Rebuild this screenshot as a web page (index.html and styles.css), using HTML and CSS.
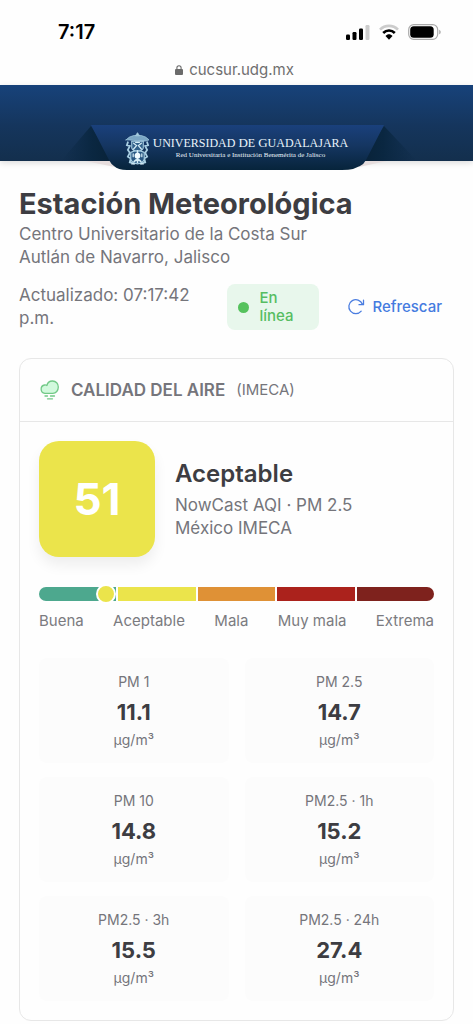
FILE: index.html
```html
<!DOCTYPE html>
<html lang="es">
<head>
<meta charset="utf-8">
<meta name="viewport" content="width=device-width, initial-scale=1">
<title>Estación Meteorológica</title>
<link rel="stylesheet" href="styles.css">
</head>
<body>
<div class="status-bar">
  <span class="clock">7:17</span>
  <div class="status-icons">
    <svg width="24" height="16" viewBox="0 0 24 16" aria-hidden="true">
      <rect x="0" y="10.500" width="4" height="5.500" rx="1.200"/>
      <rect x="6.500" y="8" width="4" height="8" rx="1.200"/>
      <rect x="13" y="4.500" width="4" height="11.500" rx="1.200"/>
      <rect x="19.500" y="1" width="4" height="15" rx="1.200" fill="#ccc"/>
    </svg>
    <svg width="20" height="16" viewBox="0 0 20 16" aria-hidden="true" fill="none" stroke-width="2.600">
      <path d="M1 5.700C6 .6 14 .6 19 5.700" stroke="#ccc"/>
      <path d="M4.200 9c3.300-3.400 8.300-3.400 11.600 0" stroke="#000"/>
      <path d="M6.500 12c2-2.300 5-2.300 7 0L10 15.800z" fill="#000"/>
    </svg>
    <svg width="34" height="16" viewBox="0 0 34 16" aria-hidden="true">
      <rect x=".7" y=".7" width="29" height="14.600" rx="5" fill="none" stroke="#aaa" stroke-width="1.200"/>
      <rect x="2.200" y="2.200" width="23.500" height="11.600" rx="3.500"/>
      <path d="M31.200 5.700c2 .8 2 3.800 0 4.600z" fill="#aaa"/>
    </svg>
  </div>
</div>
<div class="address">
  <svg width="8" height="10" viewBox="0 0 8 10" aria-hidden="true"><rect y="4" width="8" height="6" rx="1" fill="#6b6b6b"/><path d="M1.900 4.500V2.800a2.100 2.100 0 0 1 4.200 0v1.700" fill="none" stroke="#6b6b6b" stroke-width="1.100"/></svg>
  <span>cucsur.udg.mx</span>
</div>
<header class="banner">
  <div class="plaque">
    <svg class="ribbon" width="348" height="49" viewBox="0 0 348 49" aria-hidden="true">
      <defs>
        <linearGradient id="plate" x1="0" y1="0" x2="0" y2="1"><stop offset="0" stop-color="#1a407c"/><stop offset=".45" stop-color="#153662"/><stop offset="1" stop-color="#07243b"/></linearGradient>
        <linearGradient id="foldL" x1="0" x2="1"><stop offset="0" stop-color="#0b2844" stop-opacity="0"/><stop offset=".6" stop-color="#0a2741"/><stop offset="1" stop-color="#082238"/></linearGradient>
        <linearGradient id="foldR" x1="1" x2="0"><stop offset="0" stop-color="#0b2844" stop-opacity="0"/><stop offset=".6" stop-color="#0a2741"/><stop offset="1" stop-color="#082238"/></linearGradient>
      </defs>
      <path d="M22 36h30v6z" fill="#e6dddd"/><path d="M324 36h-28v6z" fill="#e6dddd"/>
      <path d="M28 1L-2 36h52z" fill="url(#foldL)"/><path d="M321 1l33 35h-56z" fill="url(#foldR)"/>
      <path d="M28 0H321L303 35Q301 39 297 41L290 44Q286 45 279 45H64Q55 45 51 41Q48 39 46 35Z" fill="url(#plate)"/>
    </svg>
    <div class="brand">
      <svg width="25" height="35" viewBox="0 0 26 35" aria-hidden="true" fill="none" stroke="#a9cfe3" stroke-linecap="round">
        <path d="M1 8.500q3-3.500 8-4.500h8q5 1 8 4.500-2 2-12 1T1 8.500z" fill="#7ba6c4" stroke-width=".7"/>
        <path d="M11 4l2-3 2 3z" fill="#a9cfe3" stroke-width=".7"/>
        <path d="M3 11l-1 3 3 1-2 4 2 3-2 4 3 2-1 4 4 1M23 11l1 3-3 1 2 4-2 3 2 4-3 2 1 4-4 1" stroke-width="1.900"/>
        <path d="M7 10h12v7q-1 3-6 3.500Q8 20 7 17z" fill="#32618a" stroke-width="1.100"/>
        <path d="M9 12l3 2.500L9 18M17 12l-3 2.500 3 3.500M11 11h4" stroke="#d6edf7" stroke-width="1.300"/>
        <path d="M6 21.500q7-3 14 0v7q-1 4-7 5-6-1-7-5z" fill="#285782" stroke-width="1.200"/>
        <path d="M13 20v12M9.500 31q3.500-4 7 0" stroke="#d6edf7" stroke-width="1.700"/>
        <circle cx="13" cy="25" r="3" fill="#f0fbff" stroke="none"/>
        <path d="M8.500 23v3M17.500 23v3M7 33.500h3M16 33.500h3" stroke="#d6edf7" stroke-width="1.300"/>
      </svg>
      <div class="brand-text">
        <div class="university"><b>U</b>NIVERSIDAD <b>D</b>E <b>G</b>UADALAJARA</div>
        <div class="motto">Red Universitaria e Institución Benemérita de Jalisco</div>
      </div>
    </div>
  </div>
</header>
<main>
  <h1>Estación Meteorológica</h1>
  <p class="muted">Centro Universitario de la Costa Sur</p>
  <p class="muted">Autlán de Navarro, Jalisco</p>
  <div class="toolbar">
    <p class="muted updated">Actualizado: 07:17:42 p.m.</p>
    <div class="online"><span class="dot"></span><span class="online-label">En línea</span></div>
    <button class="refresh" type="button">
      <svg width="18" height="18" viewBox="0 0 18 18" aria-hidden="true" fill="none" stroke="#4a7de0" stroke-width="1.300" stroke-linecap="round" stroke-linejoin="round"><path d="M14.200 13.200A7 7 0 1 1 15.400 6.200M16.500 2.200v4.500H12"/></svg>
      Refrescar
    </button>
  </div>
  <section class="card">
    <div class="card-head">
      <svg width="20" height="20" viewBox="0 0 20 20" aria-hidden="true" fill="none" stroke="#72c987" stroke-width="1.300" stroke-linecap="round" stroke-linejoin="round"><path d="M4.800 13.300a4.200 4.200 0 0 1-.2-8.300q1.300-.2 2.300.5A5.700 5.700 0 0 1 12.600 1a5.800 5.800 0 0 1 5.700 6c0 3.500-2.200 6.300-5.500 6.300z" fill="#d2f9dd"/><path d="M5 16h2.500M10.500 16h4M7.500 18.800h5"/></svg>
      <h2>CALIDAD DEL AIRE</h2><span class="standard">(IMECA)</span>
    </div>
    <div class="card-body">
      <div class="summary">
        <div class="score">51</div>
        <div><h3>Aceptable</h3><p class="muted">NowCast AQI · PM 2.5</p><p class="muted">México IMECA</p></div>
      </div>
      <div class="scale">
        <span class="good"></span><span class="fair"></span><span class="bad"></span><span class="very-bad"></span><span class="extreme"></span>
        <i class="marker" style="left:17%"></i>
      </div>
      <div class="labels"><span>Buena</span><span>Aceptable</span><span>Mala</span><span>Muy mala</span><span>Extrema</span></div>
      <div class="readings">
        <div class="reading"><span>PM 1</span><strong>11.1</strong><span>µg/m³</span></div>
        <div class="reading"><span>PM 2.5</span><strong>14.7</strong><span>µg/m³</span></div>
        <div class="reading"><span>PM 10</span><strong>14.8</strong><span>µg/m³</span></div>
        <div class="reading"><span>PM2.5 · 1h</span><strong>15.2</strong><span>µg/m³</span></div>
        <div class="reading"><span>PM2.5 · 3h</span><strong>15.5</strong><span>µg/m³</span></div>
        <div class="reading"><span>PM2.5 · 24h</span><strong>27.4</strong><span>µg/m³</span></div>
      </div>
    </div>
  </section>
</main>
</body>
</html>
```
FILE: styles.css
```css
* { box-sizing: border-box; }
body { margin: 0; background: #fefefe; color: #3d3d42; font-family: Inter, "Liberation Sans", sans-serif; }
h1, h2, h3, p { margin: 0; }
svg { flex: none; }

.status-bar { display: flex; justify-content: space-between; align-items: center; padding: 20px 31px 0 58px; }
.clock { color: #000; font-size: 20px; line-height: 24px; font-weight: 600; }
.status-icons { display: flex; align-items: center; gap: 9px; }
.address { display: flex; justify-content: center; align-items: center; gap: 6px; padding: 16px 4px 5px 0; color: #6f6f6f; font-size: 15px; line-height: 20px; }

.banner { display: flex; justify-content: center; align-items: flex-start; height: 76px; padding-top: 40px; background: linear-gradient(#17427a, #15355c 55%, #132f4d); box-shadow: 0 2px 6px #0002; }
.plaque { position: relative; width: 348px; height: 46px; }
.ribbon { position: absolute; top: 0; left: 0; overflow: visible; }
.brand { position: relative; display: flex; justify-content: center; align-items: center; gap: 3px; height: 46px; color: #e9f3fa; font-family: "Liberation Serif", serif; }
.brand-text { text-align: center; white-space: nowrap; }
.university { font-size: 12px; line-height: 14px; }
.university b { font-size: 13px; font-weight: 400; }
.motto { font-size: 7px; line-height: 10px; }

main { padding: 27px 19px 4px; }
h1 { margin-bottom: 3px; font-size: 29px; line-height: 32px; font-weight: 700; }
.muted { color: #75757b; font-size: 17px; line-height: 23px; }
.toolbar { display: flex; align-items: center; gap: 20px; margin: 15px 0 28px; }
.updated { flex: 1; }
.online { display: flex; align-items: center; gap: 10px; width: 92px; padding: 5px 11px; border-radius: 8px; background: #e8f7ec; color: #56bd62; font-size: 15px; line-height: 18px; font-weight: 500; }
.online-label { width: min-content; }
.dot { flex: none; width: 11px; height: 11px; border-radius: 50%; background: #55c25d; }
.refresh { display: flex; align-items: center; gap: 7px; padding: 8px; margin-right: 4px; border: 0; background: transparent; color: #457be0; font: 500 15px/20px Inter, "Liberation Sans", sans-serif; }

.card { border: 1px solid #e7e7e7; border-radius: 12px; }
.card-head { display: flex; align-items: center; gap: 11px; padding: 20px; border-bottom: 1px solid #e7e7e7; color: #75757b; }
.card-head h2 { font-size: 17px; line-height: 22px; font-weight: 600; }
.standard { font-size: 15px; line-height: 22px; }
.card-body { padding: 19px; }
.summary { display: flex; align-items: center; gap: 20px; }
.score { display: flex; align-items: center; justify-content: center; width: 116px; height: 116px; border-radius: 20px; background: #ebe44b; box-shadow: 0 8px 14px #0001; color: #fff; font-size: 44px; font-weight: 700; }
h3 { margin-bottom: 5px; font-size: 24px; line-height: 30px; font-weight: 600; }
.scale { position: relative; display: grid; grid-template-columns: repeat(5, 1fr); gap: 2px; height: 14px; margin: 30px 0 10px; }
.scale span:first-child { border-radius: 7px 0 0 7px; }
.scale span:nth-child(5) { border-radius: 0 7px 7px 0; }
.good { background: #4da88e; }
.fair { background: #ebe44b; }
.bad { background: #df9136; }
.very-bad { background: #ab221c; }
.extreme { background: #7e221d; }
.marker { position: absolute; top: 50%; width: 20px; height: 20px; transform: translate(-50%, -50%); border: 2px solid #fff; border-radius: 50%; background: #ebe44b; }
.labels { display: flex; justify-content: space-between; color: #7b7b80; font-size: 15px; line-height: 20px; }
.readings { display: grid; grid-template-columns: 1fr 1fr; gap: 14px 16px; margin-top: 27px; }
.reading { display: flex; flex-direction: column; align-items: center; padding: 13px 12px 12px; border-radius: 8px; background: #fcfcfc; color: #75757b; font-size: 14px; line-height: 22px; }
.reading strong { color: #3d3d42; font-size: 22px; line-height: 30px; font-weight: 700; margin: 4px 0 2px; }
```
